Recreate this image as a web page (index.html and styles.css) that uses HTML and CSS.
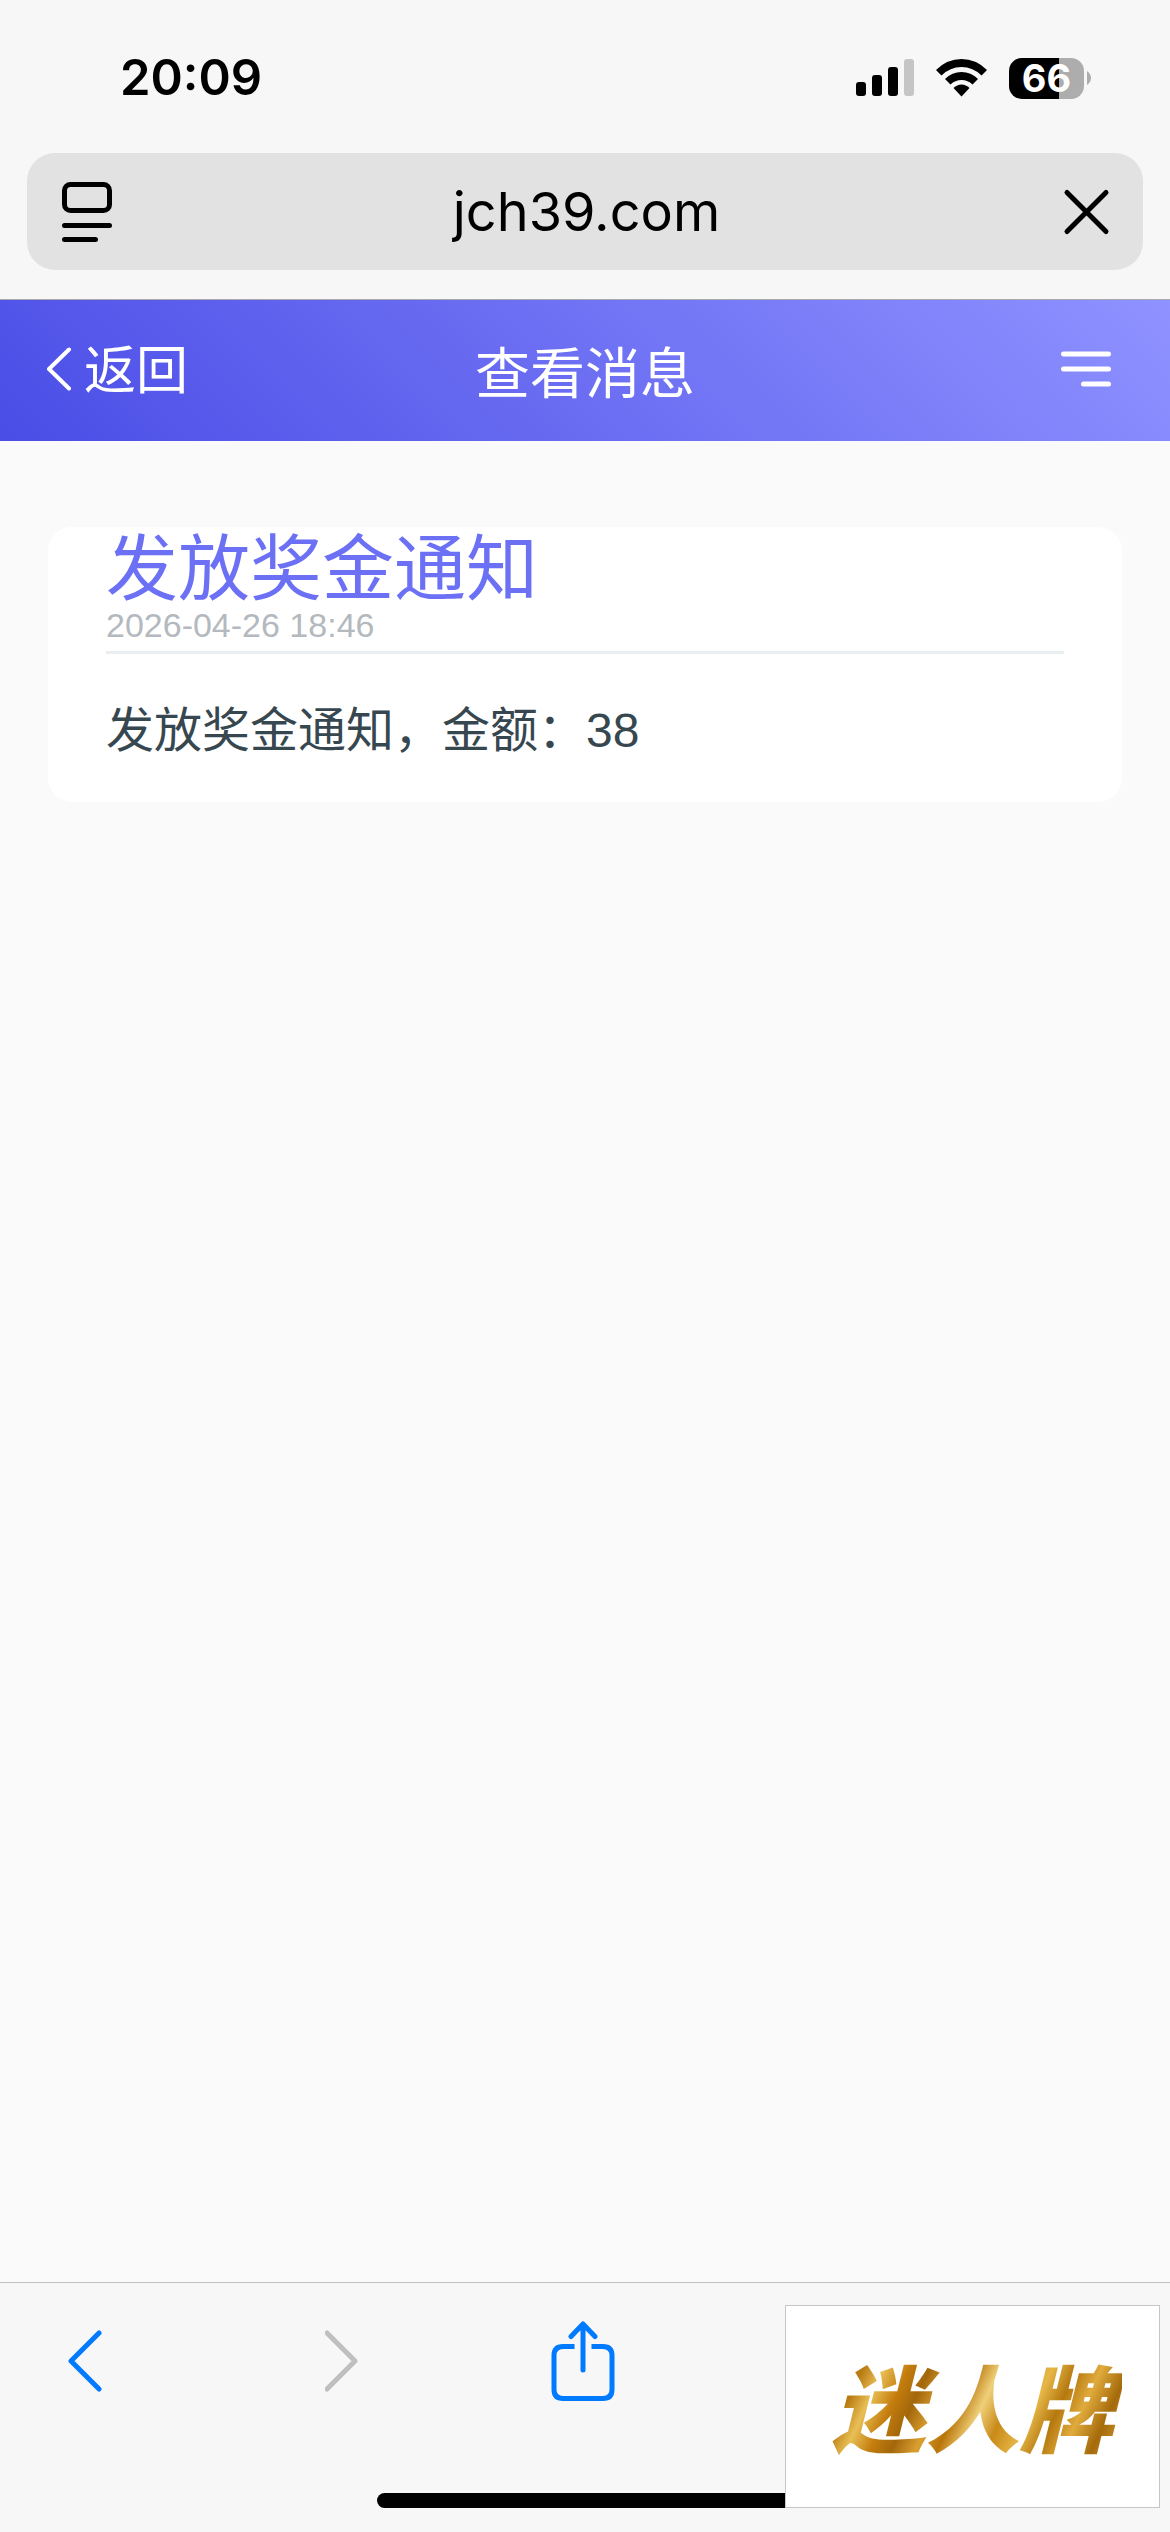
FILE: index.html
```html
<!DOCTYPE html>
<html lang="zh-CN">
<head>
<meta charset="utf-8">
<meta name="viewport" content="width=device-width, initial-scale=1">
<title>查看消息</title>
<link rel="stylesheet" href="styles.css">
</head>
<body>
<div class="browser-top">
  <div class="status">
    <time class="clock">20:09</time>
    <div class="indicators">
      <svg width="58" height="38" viewBox="0 0 58 38" aria-hidden="true">
        <rect x="0" y="23" width="10" height="14" rx="3"/>
        <rect x="16" y="16" width="10" height="21" rx="3"/>
        <rect x="32" y="8" width="10" height="29" rx="3"/>
        <rect x="48" y="0" width="10" height="37" rx="3" fill="#c5c5c5"/>
      </svg>
      <svg width="51" height="38" viewBox="0 0 51 38" aria-hidden="true">
        <path d="M0 11Q11 0 25.500 0Q40 0 51 11L45.500 16.500Q37 8 25.500 8Q14 8 5.500 16.500Z"/>
        <path d="M9 20Q16 13 25.500 13Q35 13 42 20L36.500 25.500Q32 21 25.500 21Q19 21 14.500 25.500Z"/>
        <path d="M17.500 29Q21 25.500 25.500 25.500Q30 25.500 33.500 29L25.500 37.500Z"/>
      </svg>
      <div class="battery-wrap">
        <div class="battery">66</div>
        <svg width="4" height="14" viewBox="0 0 4 14" aria-hidden="true"><path d="M0 0Q4 3 4 7Q4 11 0 14Z" fill="#adadad"/></svg>
      </div>
    </div>
  </div>
  <div class="address">
    <button class="plain" type="button" aria-label="页面设置">
      <svg width="50" height="60" viewBox="0 0 50 60" fill="none" stroke="#000" stroke-width="5" stroke-linecap="round" aria-hidden="true">
        <rect x="2.500" y="2.500" width="45" height="26" rx="6"/>
        <path d="M2.500 43.500H47.500M2.500 57.500H33.500"/>
      </svg>
    </button>
    <span class="host">jch39.com</span>
    <button class="plain" type="button" aria-label="停止">
      <svg width="50" height="50" viewBox="0 0 50 50" fill="none" stroke="#000" stroke-width="5" stroke-linecap="round" aria-hidden="true">
        <path d="M6 5.500L45 44.500M45 5.500L6 44.500"/>
      </svg>
    </button>
  </div>
</div>
<header class="nav">
  <a class="back" href="#">
    <svg width="26" height="48" viewBox="0 0 26 48" fill="none" stroke="#fff" stroke-width="4" stroke-linecap="round" stroke-linejoin="round" aria-hidden="true"><path d="M23 2.500L3 22L23 41.500"/></svg>
    返回
  </a>
  <h1 class="nav-title">查看消息</h1>
  <button class="plain menu" type="button" aria-label="菜单">
    <svg width="50" height="40" viewBox="0 0 50 40" stroke="#fff" stroke-width="5" stroke-linecap="round" aria-hidden="true"><path d="M2.500 3H47.500M2.500 18H47.500M22.500 33H47.500"/></svg>
  </button>
</header>
<main class="content">
  <article class="card">
    <h2 class="card-title">发放奖金通知</h2>
    <time class="date">2026-04-26 18:46</time>
    <p class="message">发放奖金通知，金额：38</p>
  </article>
</main>
<footer class="toolbar">
  <div class="tools">
    <button class="plain tool" type="button" aria-label="后退">
      <svg width="36" height="62" viewBox="0 0 36 62" fill="none" stroke="#007aff" stroke-width="5" stroke-linecap="round" stroke-linejoin="round" aria-hidden="true"><path d="M32 3L4 31L32 59"/></svg>
    </button>
    <button class="plain tool forward" type="button" aria-label="前进" disabled>
      <svg width="36" height="62" viewBox="0 0 36 62" fill="none" stroke="#bfbfbf" stroke-width="5" stroke-linecap="round" stroke-linejoin="round" aria-hidden="true"><path d="M2 3L30 31L2 59"/></svg>
    </button>
    <button class="plain tool" type="button" aria-label="分享">
      <svg width="64" height="80" viewBox="0 0 64 80" fill="none" stroke="#007aff" stroke-width="5" stroke-linecap="round" stroke-linejoin="round" aria-hidden="true">
        <path stroke-linecap="butt" d="M23.500 25.500H12Q3 25.500 3 34.500V68.500Q3 77.500 12 77.500H52Q61 77.500 61 68.500V34.500Q61 25.500 52 25.500H40.500"/>
        <path d="M32 49V3M20 15.500L32 3L44 15.500"/>
      </svg>
    </button>
  </div>
  <div class="home-bar"></div>
  <div class="watermark"><span class="brand">迷人牌</span></div>
</footer>
</body>
</html>
```
FILE: styles.css
```css
* {
  box-sizing: border-box;
}

body {
  margin: 0;
  min-height: 100vh;
  display: flex;
  flex-direction: column;
  background: #fafafa;
  color: #000;
  font-family: "Liberation Sans", "Noto Sans CJK SC", sans-serif;
}

svg {
  display: block;
}

.plain {
  display: block;
  padding: 0;
  border: 0;
  background: none;
}

.browser-top {
  padding: 48px 27px 29px;
  background: #f7f7f7;
  border-bottom: 1px solid #aaa;
}

.status {
  display: flex;
  justify-content: space-between;
  align-items: center;
  height: 60px;
  margin-bottom: 45px;
  padding: 0 52px 0 93px;
}

.clock {
  font: 600 49px/60px Inter, sans-serif;
}

.indicators,
.battery-wrap {
  display: flex;
  align-items: center;
}

.indicators {
  gap: 22px;
}

.battery-wrap {
  gap: 3px;
}

.battery {
  width: 75px;
  height: 41px;
  border-radius: 13px;
  background: linear-gradient(to right, #000 50px, #adadad 50px);
  color: #fff;
  font: 700 38px/41px Inter, sans-serif;
  text-align: center;
}

.address {
  display: flex;
  justify-content: space-between;
  align-items: center;
  height: 117px;
  padding: 0 32px 0 35px;
  border-radius: 28px;
  background: #e2e2e2;
}

.host {
  font: 400 54px/64px Inter, sans-serif;
}

.nav {
  display: grid;
  grid-template-columns: 1fr auto 1fr;
  align-items: center;
  height: 141px;
  padding: 0 46px;
  background: linear-gradient(45deg, #4a4de6, #8f92ff);
  color: #fff;
}

.back {
  display: flex;
  align-items: center;
  gap: 12px;
  color: inherit;
  font-size: 52px;
  line-height: 72px;
  text-decoration: none;
}

.nav-title {
  margin: 0;
  padding-top: 6px;
  font-size: 55px;
  font-weight: 400;
  line-height: 72px;
}

.menu {
  justify-self: end;
  margin-right: 13px;
}

.content {
  flex: 1;
  padding: 86px 48px;
}

.card {
  padding: 2px 58px 36px;
  border-radius: 24px;
  background: #fff;
}

.card-title {
  margin: 0;
  color: #6b70f5;
  font-size: 72px;
  font-weight: 400;
  line-height: 80px;
}

.date {
  display: block;
  padding-bottom: 10px;
  border-bottom: 3px solid #e9eef1;
  color: #b3b9be;
  font-size: 34px;
  line-height: 32px;
}

.message {
  margin: 42px 0 0;
  color: #37474f;
  font-size: 48px;
  line-height: 70px;
}

.toolbar {
  position: relative;
  display: flex;
  flex-direction: column;
  justify-content: space-between;
  height: 250px;
  padding: 38px 0 24px;
  border-top: 1px solid #c0c0c0;
  background: #f7f7f7;
}

.tools {
  display: flex;
  align-items: center;
  gap: 190px;
  height: 80px;
  padding-left: 67px;
}

.tool {
  min-width: 52px;
}

.forward svg {
  margin-left: auto;
}

.home-bar {
  width: 416px;
  height: 15px;
  margin: 0 auto;
  border-radius: 8px;
  background: #000;
}

.watermark {
  position: absolute;
  right: 10px;
  bottom: 24px;
  display: flex;
  align-items: center;
  justify-content: center;
  width: 375px;
  height: 203px;
  padding-bottom: 6px;
  border: 1px solid #c6c6c6;
  background: #fff;
}

.brand {
  padding: 0 8px;
  background: linear-gradient(115deg, #9b6208, #d79d25 8%, #b87a12 14%, #e8bf55 20%, #c47d0d 27%, #a3670b 33%, #d9a030 40%, #b87408 46%, #efd07a 53%, #c98a18 60%, #e6b848 68%, #b5780f 75%, #e0ab3c 82%, #a56a0b 90%, #dba73a);
  background-clip: text;
  color: transparent;
  font: italic 900 94px/112px "Noto Sans CJK SC", sans-serif;
}
```
